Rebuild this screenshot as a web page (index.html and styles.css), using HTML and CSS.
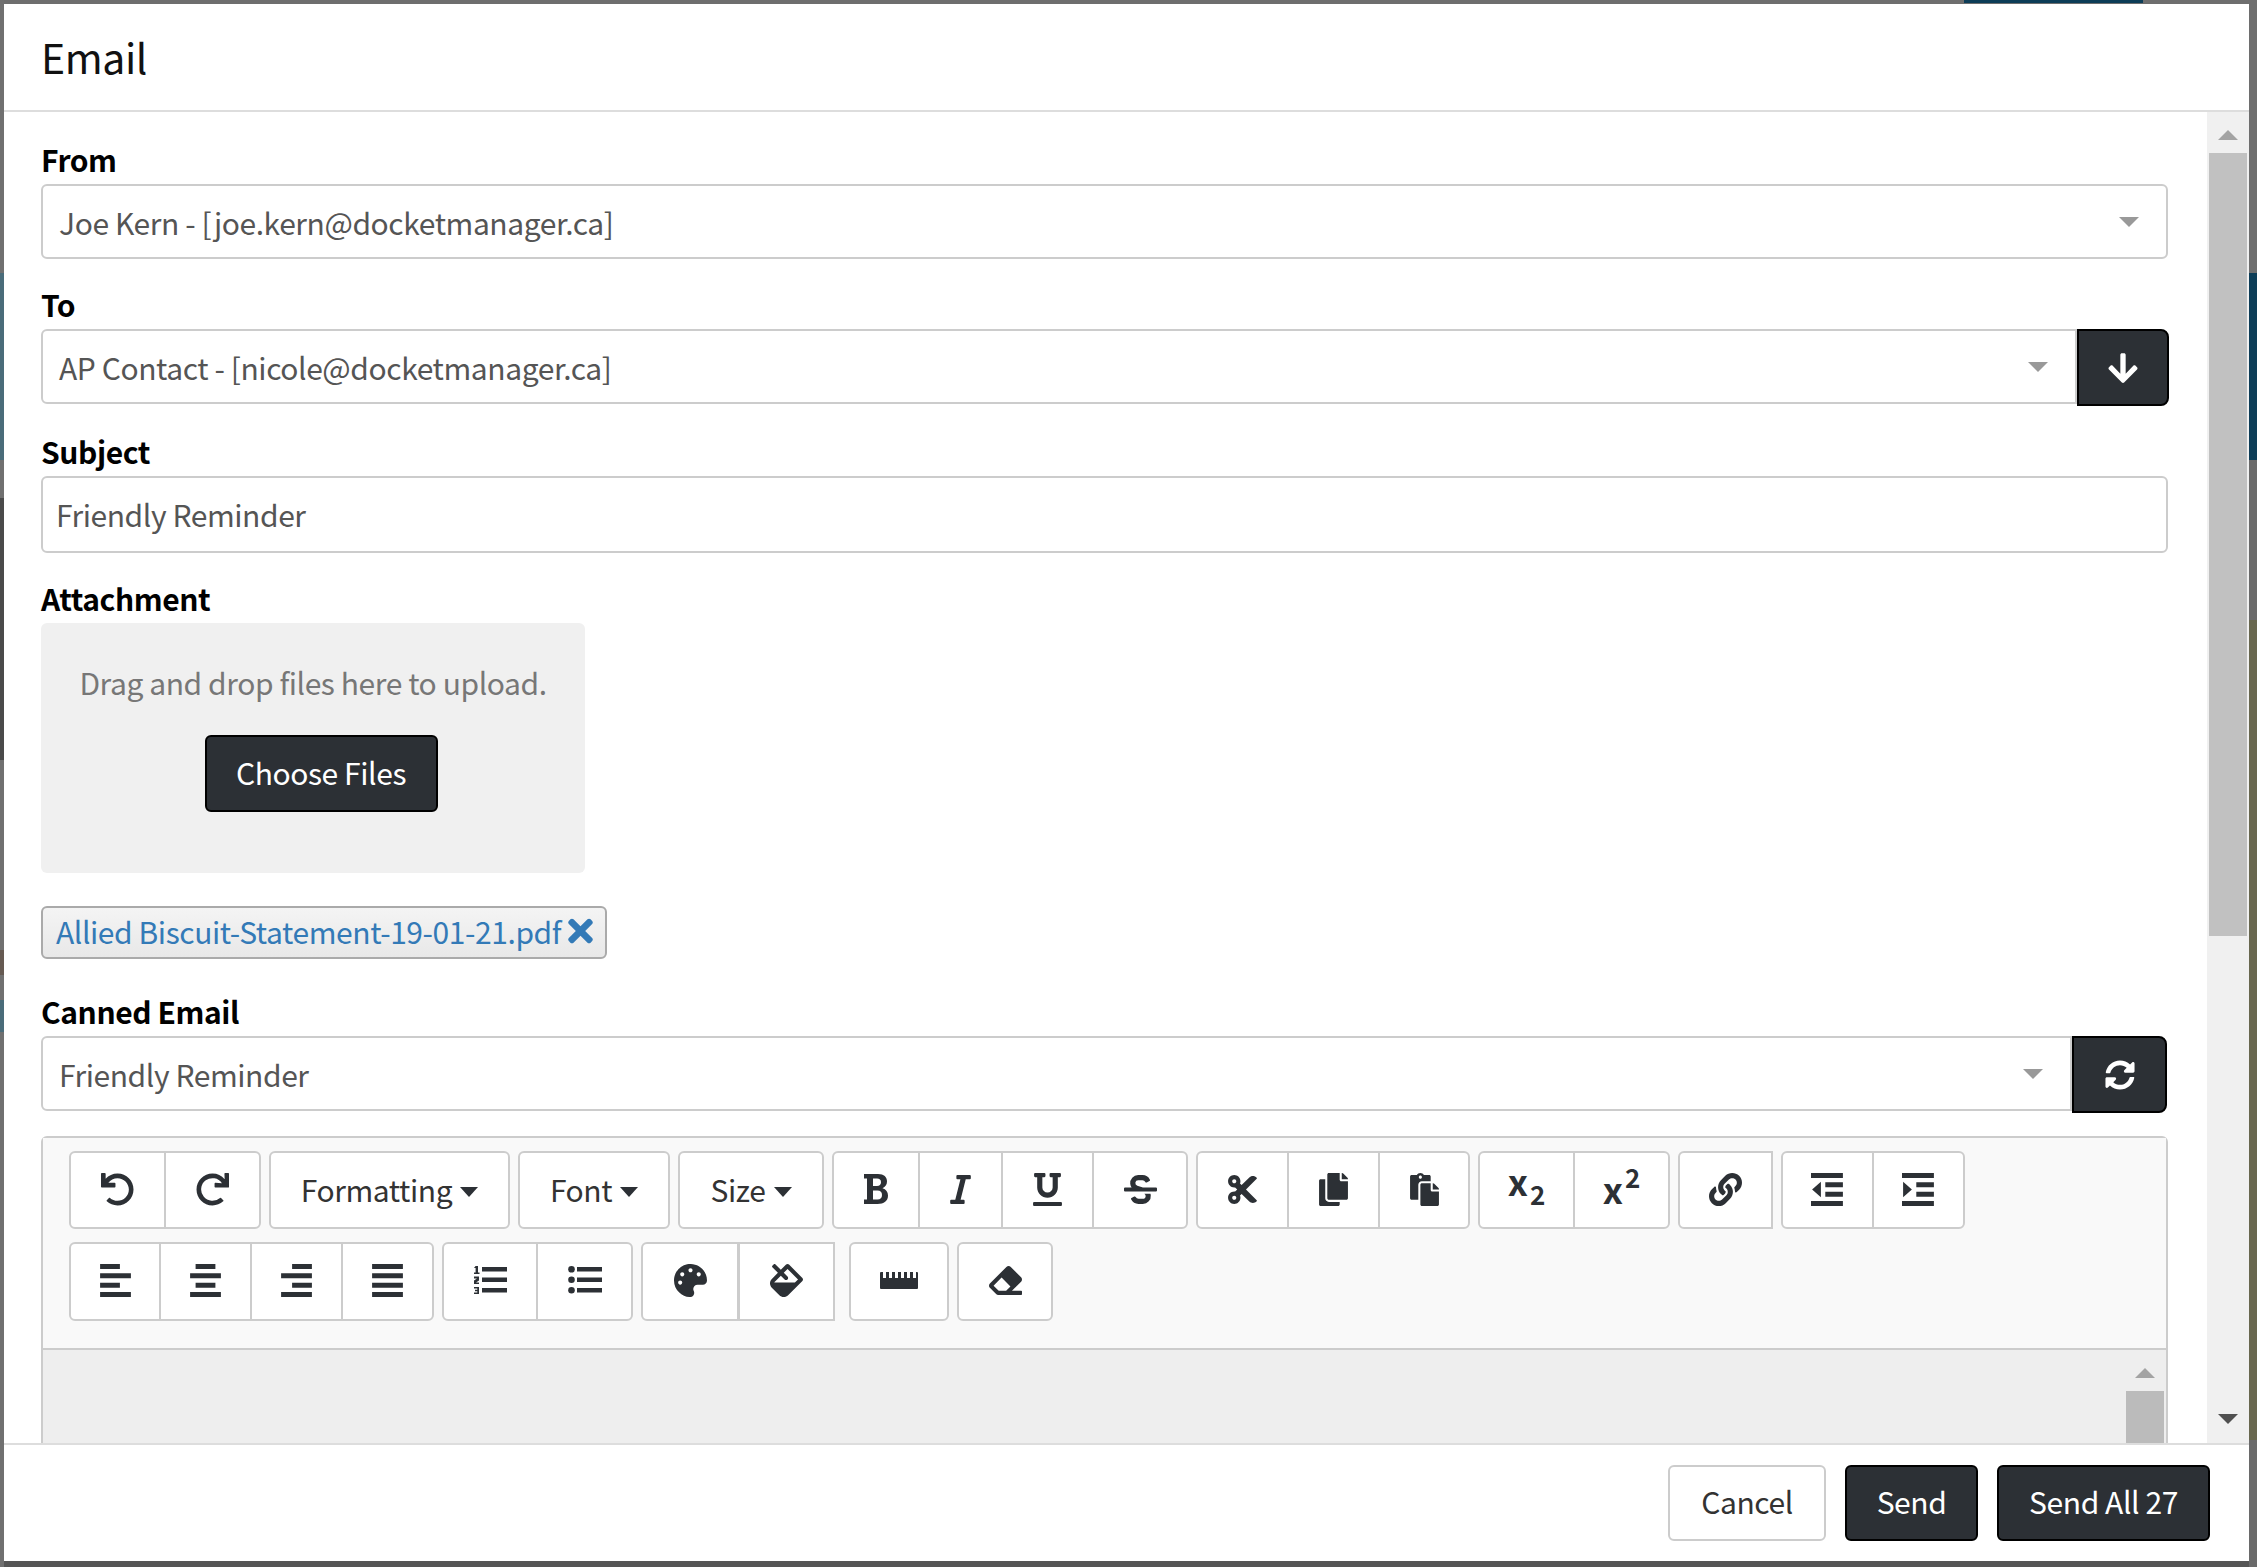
FILE: index.html
```html
<!DOCTYPE html>
<html lang="en">
<head>
<meta charset="utf-8">
<title>Email</title>
<link rel="stylesheet" href="styles.css">
</head>
<body>
<div class="backdrop-top"></div>
<div class="backdrop-left"></div>
<div class="backdrop-right"></div>
<main class="modal">
  <header class="modal-header"><h1 class="modal-title">Email</h1></header>
  <div class="modal-body">
    <div class="form">
      <label class="label">From</label>
      <div class="select field"><span>Joe Kern - [joe.kern@docketmanager.ca]</span><i class="arrow"></i></div>

      <label class="label">To</label>
      <div class="group field-to">
        <div class="select attached"><span>AP Contact - [nicole@docketmanager.ca]</span><i class="arrow"></i></div>
        <button class="btn-dark addon addon-to"><svg class="ic-addon" viewBox="0 0 448 512"><path d="M413.1 222.5l22.2 22.2c9.4 9.4 9.4 24.6 0 33.9L241 473c-9.4 9.4-24.6 9.4-33.9 0L12.7 278.6c-9.4-9.4-9.4-24.6 0-33.9l22.2-22.2c9.5-9.5 25-9.3 34.3.4L184 343.4V56c0-13.3 10.7-24 24-24h32c13.3 0 24 10.7 24 24v287.4l114.8-120.5c9.3-9.8 24.8-10 34.3-.4z"/></svg></button>
      </div>

      <label class="label">Subject</label>
      <div class="input">Friendly Reminder</div>

      <label class="label">Attachment</label>
      <div class="dropzone">
        <p class="drop-text">Drag and drop files here to upload.</p>
        <button class="btn-dark choose">Choose Files</button>
      </div>

      <div class="chip"><span>Allied Biscuit-Statement-19-01-21.pdf</span><svg class="ic-x" viewBox="0 70 352 372"><path d="M242.72 256l100.07-100.07c12.28-12.28 12.28-32.19 0-44.48l-22.24-22.24c-12.28-12.28-32.19-12.28-44.48 0L176 189.28 75.93 89.21c-12.28-12.28-32.19-12.28-44.48 0L9.21 111.45c-12.28 12.28-12.28 32.19 0 44.48L109.28 256 9.21 356.07c-12.28 12.28-12.28 32.19 0 44.48l22.24 22.24c12.28 12.28 32.2 12.28 44.48 0L176 322.72l100.07 100.07c12.28 12.28 32.2 12.28 44.48 0l22.24-22.24c12.28-12.28 12.28-32.19 0-44.48L242.72 256z"/></svg></div>

      <label class="label label-canned">Canned Email</label>
      <div class="group field-canned">
        <div class="select attached"><span>Friendly Reminder</span><i class="arrow"></i></div>
        <button class="btn-dark addon addon-canned"><svg class="ic-addon" viewBox="0 0 512 512"><path d="M370.72 133.28C339.458 104.008 298.888 87.962 255.848 88c-77.458.068-144.328 53.178-162.791 126.85-1.344 5.363-6.122 9.15-11.651 9.15H24.103c-7.498 0-13.194-6.807-11.807-14.176C33.933 94.924 134.813 8 256 8c66.448 0 126.791 26.136 171.315 68.685L463.03 40.97C478.149 25.851 504 36.559 504 57.941V192c0 13.255-10.745 24-24 24H345.941c-21.382 0-32.09-25.851-16.971-40.971l41.75-41.749zM32 296h134.059c21.382 0 32.09 25.851 16.971 40.971l-41.75 41.75c31.262 29.273 71.835 45.319 114.876 45.28 77.418-.07 144.315-53.144 162.787-126.849 1.344-5.363 6.122-9.15 11.651-9.15h57.304c7.498 0 13.194 6.807 11.807 14.176C478.067 417.076 377.187 504 256 504c-66.448 0-126.791-26.136-171.315-68.685L48.97 471.03C33.851 486.149 8 475.441 8 454.059V320c0-13.255 10.745-24 24-24z"/></svg></button>
      </div>

      <section class="editor">
        <div class="toolbar">
          <div class="tb-row">
            <div class="tb-group">
              <button class="tb w97"><svg class="ic" viewBox="0 0 512 512"><path d="M212.333 224.333H12c-6.627 0-12-5.373-12-12V12C0 5.373 5.373 0 12 0h48c6.627 0 12 5.373 12 12v78.112C117.773 39.279 184.26 7.47 258.175 8.007c136.906.994 246.448 111.623 246.157 248.532C504.041 393.258 393.12 504 256.333 504c-64.089 0-122.496-24.313-166.51-64.215-5.099-4.622-5.334-12.554-.467-17.42l33.967-33.967c4.474-4.474 11.662-4.717 16.401-.525C170.76 415.336 211.58 432 256.333 432c97.268 0 176-78.716 176-176 0-97.267-78.716-176-176-176-58.496 0-110.28 28.476-142.274 72.333h98.274c6.627 0 12 5.373 12 12v48c0 6.627-5.373 12-12 12z"/></svg></button>
              <button class="tb w97"><svg class="ic" viewBox="0 0 512 512"><path d="M500.33 0h-47.41a12 12 0 0 0-12 12.57l4 82.76A247.42 247.42 0 0 0 256 8C119.34 8 7.9 119.53 8 256.19 8.1 393.07 119.1 504 256 504a247.1 247.1 0 0 0 166.18-63.91 12 12 0 0 0 .48-17.43l-34-34a12 12 0 0 0-16.38-.55A176 176 0 1 1 402.1 157.8l-101.53-4.87a12 12 0 0 0-12.57 12v47.41a12 12 0 0 0 12 12h200.33a12 12 0 0 0 12-12V12a12 12 0 0 0-12-12z"/></svg></button>
            </div>
            <button class="tb w241 solo">Formatting<i class="caret"></i></button>
            <button class="tb w152 solo">Font<i class="caret"></i></button>
            <button class="tb w146 solo">Size<i class="caret"></i></button>
            <div class="tb-group">
              <button class="tb w88"><svg class="ic ic-b" viewBox="0 0 24 30"><path fill-rule="evenodd" d="M0 0h14c6 0 9 3 9 7.500 0 3-1.700 5.400-4.500 6.700 3.500 1 5.500 3.800 5.500 7.300C24 27 20 30 13.500 30H0v-4.500h3v-21H0zM9 4.500v7.500h4c2.600 0 4-1.400 4-3.800S15.600 4.500 13 4.500zM9 16.500v9h4.500c3 0 4.500-1.600 4.500-4.500s-1.500-4.500-4.500-4.500z"/></svg></button>
              <button class="tb w85"><svg class="ic ic-i" viewBox="0 0 320 512"><path d="M320 48v32a16 16 0 0 1-16 16h-62.760l-80 320H208a16 16 0 0 1 16 16v32a16 16 0 0 1-16 16H16a16 16 0 0 1-16-16v-32a16 16 0 0 1 16-16h62.760l80-320H112a16 16 0 0 1-16-16V48a16 16 0 0 1 16-16h192a16 16 0 0 1 16 16z"/></svg></button>
              <button class="tb w93"><svg class="ic ic-u" viewBox="0 0 448 512"><path d="M32 64h32v160c0 88.220 71.780 160 160 160s160-71.780 160-160V64h32a16 16 0 0 0 16-16V16a16 16 0 0 0-16-16H272a16 16 0 0 0-16 16v32a16 16 0 0 0 16 16h32v160a80 80 0 0 1-160 0V64h32a16 16 0 0 0 16-16V16a16 16 0 0 0-16-16H32a16 16 0 0 0-16 16v32a16 16 0 0 0 16 16zm400 384H16a16 16 0 0 0-16 16v32a16 16 0 0 0 16 16h416a16 16 0 0 0 16-16v-32a16 16 0 0 0-16-16z"/></svg></button>
              <button class="tb w96"><svg class="ic ic-s" viewBox="0 0 512 512"><path d="M496 224H293.900l-87.170-26.830A43.550 43.550 0 0 1 219.550 112h66.790A49.890 49.890 0 0 1 331 139.580a16 16 0 0 0 21.460 7.150l42.940-21.470a16 16 0 0 0 7.160-21.460l-.53-1A128 128 0 0 0 287.510 32h-68a123.680 123.680 0 0 0-123 135.640c2 20.890 10.100 39.830 21.780 56.360H16a16 16 0 0 0-16 16v32a16 16 0 0 0 16 16h480a16 16 0 0 0 16-16v-32a16 16 0 0 0-16-16zm-180.240 96A43 43 0 0 1 336 356.450 43.590 43.590 0 0 1 292.450 400h-66.790A49.890 49.890 0 0 1 181 372.420a16 16 0 0 0-21.460-7.150l-42.940 21.470a16 16 0 0 0-7.160 21.460l.53 1A128 128 0 0 0 224.490 480h68a123.680 123.680 0 0 0 123-135.640 114.250 114.250 0 0 0-5.340-24.360z"/></svg></button>
            </div>
            <div class="tb-group">
              <button class="tb w93"><svg class="ic" viewBox="0 0 448 512"><path d="M278.060 256L444.480 89.570c4.690-4.690 4.690-12.290 0-16.970-32.800-32.800-85.990-32.800-118.790 0L210.180 188.120l-24.860-24.860c4.310-10.920 6.680-22.810 6.680-35.260 0-53.020-42.980-96-96-96S0 74.980 0 128s42.980 96 96 96c4.540 0 8.990-.32 13.360-.93L142.290 256l-32.930 32.930c-4.370-.61-8.830-.93-13.360-.93-53.020 0-96 42.980-96 96s42.980 96 96 96 96-42.980 96-96c0-12.450-2.370-24.340-6.680-35.260l24.860-24.860L325.690 439.400c32.800 32.800 85.990 32.800 118.790 0 4.690-4.680 4.690-12.280 0-16.970L278.060 256zM96 160c-17.640 0-32-14.360-32-32s14.360-32 32-32 32 14.360 32 32-14.360 32-32 32zm0 256c-17.640 0-32-14.360-32-32s14.360-32 32-32 32 14.360 32 32-14.360 32-32 32z"/></svg></button>
              <button class="tb w93"><svg class="ic" viewBox="0 0 448 512"><path d="M320 448v40c0 13.255-10.745 24-24 24H24c-13.255 0-24-10.745-24-24V120c0-13.255 10.745-24 24-24h72v296c0 30.879 25.121 56 56 56h168zm0-344V0H152c-13.255 0-24 10.745-24 24v368c0 13.255 10.745 24 24 24h272c13.255 0 24-10.745 24-24V128H344c-13.200 0-24-10.800-24-24zm120.971-31.029L375.029 7.029A24 24 0 0 0 358.059 0H352v96h96v-6.059a24 24 0 0 0-7.029-16.970z"/></svg></button>
              <button class="tb w92"><svg class="ic" viewBox="0 0 448 512"><path d="M128 184c0-30.879 25.122-56 56-56h136V56c0-13.255-10.745-24-24-24h-80.610C204.306 12.890 183.637 0 160 0s-44.306 12.890-55.390 32H24C10.745 32 0 42.745 0 56v336c0 13.255 10.745 24 24 24h104V184zm32-144c13.255 0 24 10.745 24 24s-10.745 24-24 24-24-10.745-24-24 10.745-24 24-24zm184 248h104v200c0 13.255-10.745 24-24 24H184c-13.255 0-24-10.745-24-24V184c0-13.255 10.745-24 24-24h136v104c0 13.200 10.800 24 24 24zm104-38.059V256h-96v-96h6.059a24 24 0 0 1 16.970 7.029l65.941 65.941a24.002 24.002 0 0 1 7.030 16.971z"/></svg></button>
            </div>
            <div class="tb-group">
              <button class="tb w97"><span class="script script-sub">x<sub class="sub">2</sub></span></button>
              <button class="tb w97"><span class="script script-sup">x<sup class="sup">2</sup></span></button>
            </div>
            <button class="tb w95 solo square-r"><svg class="ic" viewBox="0 0 512 512"><path d="M326.612 185.391c59.747 59.809 58.927 155.698.36 214.590-.11.12-.24.25-.36.37l-67.200 67.200c-59.270 59.270-155.699 59.262-214.960 0-59.270-59.260-59.270-155.700 0-214.960l37.106-37.106c9.840-9.840 26.786-3.300 27.294 10.606.648 17.722 3.826 35.527 9.690 52.721 1.986 5.822.567 12.262-3.783 16.612l-13.087 13.087c-28.026 28.026-28.905 73.660-1.155 101.960 28.024 28.579 74.086 28.749 102.325.51l67.200-67.190c28.191-28.191 28.073-73.757 0-101.830-3.701-3.694-7.429-6.564-10.341-8.569a16.037 16.037 0 0 1-6.947-12.606c-.396-10.567 3.348-21.456 11.698-29.806l21.054-21.055c5.521-5.521 14.182-6.199 20.584-1.731a152.482 152.482 0 0 1 20.522 17.197zM467.547 44.449c-59.261-59.262-155.690-59.270-214.960 0l-67.200 67.200c-.12.12-.25.25-.36.37-58.566 58.892-59.387 154.781.36 214.590a152.454 152.454 0 0 0 20.521 17.196c6.402 4.468 15.064 3.789 20.584-1.731l21.054-21.055c8.350-8.350 12.094-19.239 11.698-29.806a16.037 16.037 0 0 0-6.947-12.606c-2.912-2.005-6.640-4.875-10.341-8.569-28.073-28.073-28.191-73.639 0-101.830l67.200-67.190c28.239-28.239 74.300-28.069 102.325.51 27.750 28.300 26.872 73.934-1.155 101.960l-13.087 13.087c-4.350 4.350-5.769 10.790-3.783 16.612 5.864 17.194 9.042 34.999 9.690 52.721.509 13.906 17.454 20.446 27.294 10.606l37.106-37.106c59.271-59.259 59.271-155.699.001-214.959z"/></svg></button>
            <div class="tb-group">
              <button class="tb w93"><svg class="ic" viewBox="0 0 30 30"><path d="M0 0h29v4.500H0zM13 8.500h16V13H13zM13 17h16v4.500H13zM0 25.500h29V30H0zM9 8v14L1 15z"/></svg></button>
              <button class="tb w93"><svg class="ic" viewBox="0 0 30 30"><path d="M0 0h29v4.500H0zM13 8.500h16V13H13zM13 17h16v4.500H13zM0 25.500h29V30H0zM1 8v14l8-7z"/></svg></button>
            </div>
          </div>
          <div class="tb-row row2">
            <div class="tb-group">
              <button class="tb w92"><svg class="ic" viewBox="0 0 28 30"><path d="M0 0h18v4.500H0zM0 8.500h28V13H0zM0 17h18v4.500H0zM0 25.500h28V30H0z"/></svg></button>
              <button class="tb w93"><svg class="ic" viewBox="0 0 28 30"><path d="M5 0h18v4.500H5zM0 8.500h28V13H0zM5 17h18v4.500H5zM0 25.500h28V30H0z"/></svg></button>
              <button class="tb w93"><svg class="ic" viewBox="0 0 28 30"><path d="M10 0h18v4.500H10zM0 8.500h28V13H0zM10 17h18v4.500H10zM0 25.500h28V30H0z"/></svg></button>
              <button class="tb w93"><svg class="ic" viewBox="0 0 28 30"><path d="M0 0h28v4.500H0zM0 8.500h28V13H0zM0 17h28v4.500H0zM0 25.500h28V30H0z"/></svg></button>
            </div>
            <div class="tb-group">
              <button class="tb w96"><svg class="ic ic-wide" viewBox="0 0 34 30"><path d="M9 1h25v4.500H9zM9 11.500h25V16H9zM9 22h25v4.500H9zM2.600 0H5v6.500h1.500V8H1V6.500h1.600V2H1zM1 10.500h5v4L3 16.500H6V18H1v-3.500l3-2H1zM1 21h5v7H1v-1.500h3.300v-1.300H2v-1.400h2.300v-1.300H1z"/></svg></button>
              <button class="tb w97"><svg class="ic ic-wide" viewBox="0 0 34 30"><path d="M9 1h25v4.500H9zM9 11.500h25V16H9zM9 22h25v4.500H9z"/><circle cx="3.500" cy="3.300" r="3.300"/><circle cx="3.500" cy="13.800" r="3.300"/><circle cx="3.500" cy="24.300" r="3.300"/></svg></button>
            </div>
            <div class="tb-group">
              <button class="tb w99 thick"><svg class="ic" viewBox="0 0 512 512"><path d="M204.300 5C104.900 24.400 24.800 104.300 5.200 203.400c-37 187 131.700 326.400 258.800 306.700 41.200-6.400 61.400-54.600 42.500-91.700-23.100-45.400 9.900-98.400 60.900-98.400h79.700c35.800 0 64.800-29.600 64.900-65.300C511.500 97.100 368.100-26.900 204.300 5zM96 320c-17.700 0-32-14.300-32-32s14.300-32 32-32 32 14.300 32 32-14.300 32-32 32zm32-128c-17.700 0-32-14.300-32-32s14.300-32 32-32 32 14.300 32 32-14.300 32-32 32zm128-64c-17.700 0-32-14.300-32-32s14.300-32 32-32 32 14.300 32 32-14.300 32-32 32zm128 64c-17.700 0-32-14.300-32-32s14.300-32 32-32 32 14.300 32 32-14.300 32-32 32z"/></svg></button>
              <button class="tb w97 square-r"><svg class="ic" viewBox="0 0 512 512"><path d="M502.630 217.060L294.940 9.370C288.690 3.120 280.500 0 272.310 0s-16.380 3.120-22.630 9.370l-81.580 81.580L81.930 4.770c-6.240-6.250-16.380-6.250-22.620 0L36.690 27.380c-6.240 6.250-6.240 16.380 0 22.630l86.190 86.180-94.760 94.760c-37.490 37.490-37.490 98.260 0 135.750l117.190 117.190c18.750 18.740 43.310 28.120 67.870 28.120 24.570 0 49.130-9.370 67.880-28.120l221.570-221.570c12.490-12.500 12.490-32.760 0-45.260zm-116.220 70.970H65.930c1.360-3.840 3.570-7.980 7.430-11.830l13.150-13.150 81.610-81.610 58.600 58.600c12.490 12.490 32.750 12.490 45.240 0s12.490-32.750 0-45.240l-58.600-58.600 58.950-58.950 162.440 162.440-48.340 48.340z"/></svg></button>
            </div>
            <button class="tb w100 solo ruler-btn"><svg class="ic-ruler" viewBox="0 0 38 17"><path d="M1 0h2v6h3V0h3v6h3V0h3v6h3V0h3v6h3V0h3v6h3V0h3v6h3V0h1a1 1 0 0 1 1 1v15a1 1 0 0 1-1 1H1a1 1 0 0 1-1-1V1a1 1 0 0 1 1-1z"/></svg></button>
            <button class="tb w96 solo"><svg class="ic" viewBox="0 0 512 512"><path d="M497.941 273.941c18.745-18.745 18.745-49.137 0-67.882l-160-160c-18.745-18.745-49.137-18.745-67.882 0l-256 256c-18.745 18.745-18.745 49.137 0 67.882l96 96A48.004 48.004 0 0 0 144 480h356c6.627 0 12-5.373 12-12v-40c0-6.627-5.373-12-12-12H355.883l142.058-142.059zm-302.627-62.627l137.373 137.373L265.373 416H150.628l-80-80 124.686-124.686z"/></svg></button>
          </div>
        </div>
        <div class="edit-area">
          <div class="scrollbar inner-bar"><i class="tri-up"></i><div class="thumb"></div></div>
        </div>
      </section>
    </div>
    <div class="scrollbar outer-bar"><i class="tri-up"></i><div class="thumb"></div><i class="tri-down"></i></div>
  </div>
  <footer class="modal-footer">
    <button class="btn-light">Cancel</button>
    <button class="btn-dark foot foot-send">Send</button>
    <button class="btn-dark foot foot-all">Send All 27</button>
  </footer>
</main>
</body>
</html>
```
FILE: styles.css
```css
* { box-sizing: border-box; }
html, body { margin: 0; height: 100%; }
body {
  position: relative;
  height: 1567px;
  overflow: hidden;
  padding: 4px 8px 6px 4px;
  background: linear-gradient(to bottom, #6e6e6e 0, #6e6e6e 1561px, #555 1561px);
  font-family: "Noto Sans CJK SC", "Noto Sans CJK JP", "Noto Sans", sans-serif;
  font-size: 30px;
  letter-spacing: -0.42px;
  color: #333;
}
.backdrop-top { position: absolute; left: 1964px; top: 0; width: 179px; height: 3px; background: #0d3d57; }
.backdrop-left {
  position: absolute; left: 0; top: 0; width: 4px; height: 1567px;
  background: linear-gradient(to bottom, #707070 0, #707070 273px, #4a6c7a 273px, #4a6c7a 460px, #707070 460px, #707070 498px, #4a4a4a 498px, #4a4a4a 760px, #707070 760px, #707070 950px, #665a52 950px, #665a52 975px, #707070 975px, #707070 1000px, #4a6c7a 1000px, #4a6c7a 1032px, #707070 1032px);
}
.backdrop-right {
  position: absolute; right: 0; top: 0; width: 8px; height: 1567px;
  background: linear-gradient(to bottom, #6e6e6e 0, #6e6e6e 273px, #0d3d57 273px, #0d3d57 460px, #6a6a6a 460px, #6a6a6a 620px, #68674f 620px, #68674f 1440px, #6a6a6a 1440px);
}
.modal {
  position: relative;
  display: flex;
  flex-direction: column;
  height: 1557px;
  background: #fff;
  overflow: hidden;
}
.modal-header {
  flex: none;
  height: 108px;
  padding: 0 0 3px 37px;
  border-bottom: 2px solid #ddd;
  display: flex;
  align-items: center;
}
.modal-title { margin: 0; font-size: 41px; line-height: 56px; font-weight: 400; color: #111; }
.modal-body { flex: 1; min-height: 0; display: flex; }
.form { flex: 1; min-width: 0; overflow: hidden; padding: 0 39px 0 37px; }
.label { display: block; height: 39px; line-height: 28px; margin-top: 31px; font-weight: 700; color: #000; font-size: 30px; }
.form > .label:first-child { margin-top: 33px; }
.form > .label-canned { margin-top: 38px; }
.select, .input {
  display: flex; align-items: center; justify-content: space-between;
  height: 75px; border: 2px solid #ccc; border-radius: 6px;
  padding: 0 27px 0 16px; color: #555; line-height: 40px; background: #fff;
}
.input { height: 77px; padding: 0 13px 2px; }
.arrow { width: 0; height: 0; border-style: solid; border-width: 10px 10px 0; border-color: #999 transparent transparent; }
.group { display: flex; }
.attached { flex: 1; min-width: 0; border-radius: 6px 0 0 6px; }
.field-canned { margin-right: 1px; }
.btn-dark {
  background: #2c3035; border: 2px solid #000; border-radius: 6px; color: #fff;
  font: inherit; letter-spacing: inherit; padding: 0 0 3px; line-height: 40px;
  display: inline-flex; align-items: center; justify-content: center;
}
.addon { flex: none; height: 77px; padding: 0; border-radius: 0 8px 8px 0; }
.addon-to { width: 92px; margin-right: -1px; }
.addon-canned { width: 95px; }
.ic-addon { width: 30px; height: 34px; fill: #fff; }
.dropzone {
  width: 544px; height: 250px; background: #f0f0f0; border-radius: 6px;
  display: flex; flex-direction: column; align-items: center;
  padding-top: 41px;
}
.drop-text { margin: 0; height: 40px; line-height: 36px; color: #777; white-space: nowrap; }
.choose { width: 233px; height: 77px; margin: 31px 0 0 16px; }
.chip {
  display: flex; align-items: center; width: 566px; height: 53px; margin-top: 33px;
  padding: 0 0 3px 13px; border: 2px solid #aaa; border-radius: 6px;
  background: linear-gradient(to bottom, #f4f4f4, #e8e8e8);
  color: #337ab7; white-space: nowrap; line-height: 40px;
}
.ic-x { width: 25px; height: 26px; margin-left: 7px; fill: #337ab7; }
.field-canned + .editor { margin-top: 23px; }
.editor { border: 2px solid #ccc; border-radius: 6px 6px 0 0; }
.toolbar { background: #f9f9f9; height: 212px; padding: 13px 0 0 26px; border-bottom: 2px solid #ccc; }
.tb-row { display: flex; gap: 8px; height: 78px; }
.row2 { margin-top: 13px; height: 79px; }
.tb-group { display: flex; }
.tb {
  height: 100%; background: #fff; border: 2px solid #ccc; border-radius: 0; color: #333;
  font: inherit; letter-spacing: inherit; padding: 0 0 2px; line-height: 40px;
  display: flex; align-items: center; justify-content: center; flex: none;
}
.tb-group .tb + .tb { margin-left: -2px; }
.tb-group .tb:first-child { border-radius: 6px 0 0 6px; }
.tb-group .tb:last-child { border-radius: 0 6px 6px 0; }
.tb.solo { border-radius: 6px; }
.tb.square-r { border-radius: 6px 0 0 6px; }
.tb-group .tb.square-r { border-radius: 0; border-right-width: 2px; }
.thick { border-right-width: 3px; }
.ruler-btn { margin-left: 6px; }
.w85 { width: 85px; } .w88 { width: 88px; } .w92 { width: 92px; } .w93 { width: 93px; }
.w95 { width: 95px; } .w96 { width: 96px; } .w97 { width: 97px; } .w99 { width: 99px; }
.w100 { width: 100px; } .w146 { width: 146px; } .w152 { width: 152px; } .w241 { width: 241px; }
.ic { height: 33px; width: 33px; fill: #2c3035; }
.ic-wide { width: 34px; height: 30px; }
.ic-b { width: 24px; height: 30px; }
.ic-ruler { width: 38px; height: 17px; fill: #2c3035; }
.script { font-weight: 700; font-size: 36px; letter-spacing: 0; color: #2c3035; line-height: 30px; display: inline-block; position: relative; }
.script-sub { top: -9px; }
.script-sup { top: -1px; }
.sub, .sup { font-size: 26px; line-height: 0; position: relative; vertical-align: baseline; margin-left: 2px; }
.sub { top: 9px; }
.sup { top: -16px; }
.caret { display: inline-block; margin-left: 8px; width: 0; height: 0; border-style: solid; border-width: 10px 9px 0; border-color: #2c3035 transparent transparent; position: relative; top: 3px; }
.edit-area { height: 200px; background: #eee; display: flex; justify-content: flex-end; }
.scrollbar { position: relative; display: flex; flex-direction: column; align-items: center; }
.inner-bar { width: 41px; padding: 0 1px 0 0; background: #eee; }
.inner-bar .tri-up { margin-top: 18px; }
.inner-bar .thumb { width: 38px; flex: none; height: 120px; margin-top: 13px; background: #bbb; }
.outer-bar { flex: none; width: 42px; background: #f0f0f0; }
.outer-bar .tri-up { margin-top: 18px; }
.outer-bar .thumb { width: 38px; height: 783px; margin-top: 13px; background: #c1c1c1; flex: none; }
.tri-up, .tri-down { width: 0; height: 0; border-style: solid; flex: none; }
.tri-up { border-width: 0 10px 10px; border-color: transparent transparent #a3a3a3; }
.tri-down { margin-top: auto; margin-bottom: 19px; border-width: 10px 10px 0; border-color: #505050 transparent transparent; }
.modal-footer {
  flex: none; height: 118px; border-top: 2px solid #ddd;
  display: flex; justify-content: flex-end; align-items: flex-start;
  padding: 20px 39px 0 0; gap: 19px; background: #fff;
}
.btn-light { width: 158px; height: 76px; background: #fff; border: 2px solid #ccc; border-radius: 6px; color: #333; font: inherit; letter-spacing: inherit; padding: 0 0 5px; line-height: 40px; }
.foot { height: 76px; padding-bottom: 5px; }
.foot-send { width: 133px; }
.foot-all { width: 213px; }
```
